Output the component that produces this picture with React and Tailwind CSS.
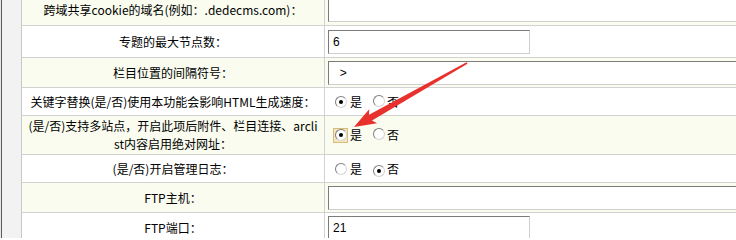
import React from "react";

const rows = [
  { label: "跨域共享cookie的域名(例如：.dedecms.com)：", h: "h-[32px]", alt: true, type: "wide", value: "" },
  { label: "专题的最大节点数：", h: "h-[32px]", alt: false, type: "short", value: "6" },
  { label: "栏目位置的间隔符号：", h: "h-[30px]", alt: true, type: "wide", value: "  >" },
  { label: "关键字替换(是/否)使用本功能会影响HTML生成速度：", h: "h-[28px]", alt: false, type: "radio", yes: true },
  {
    label: (
      <>
        <span className="block whitespace-nowrap">(是/否)支持多站点，开启此项后附件、栏目连接、arcli</span>
        <span className="block whitespace-nowrap">st内容启用绝对网址：</span>
      </>
    ),
    h: "h-[39px]",
    alt: true,
    type: "radio",
    yes: true,
    focus: true,
  },
  { label: "(是/否)开启管理日志：", h: "h-[28px]", alt: false, type: "radio", yes: false },
  { label: "FTP主机：", h: "h-[30px]", alt: true, type: "wide", value: "" },
  { label: "FTP端口：", h: "h-[30px]", alt: false, type: "short", value: "21" },
];

const Radio = ({ checked, focus }) => (
  <span
    className={
      focus
        ? "inline-flex h-[15px] w-[15px] items-center justify-center border border-[#d6bd7a] bg-[#f3e7c0]"
        : "inline-flex h-[15px] w-[15px] items-center justify-center"
    }
  >
    <span className="flex h-[12px] w-[12px] items-center justify-center rounded-full border border-[#7e7e7e] border-r-[#d4d4d4] border-b-[#d4d4d4] bg-white">
      {checked && <span className="h-[4px] w-[4px] rounded-full bg-black" />}
    </span>
  </span>
);

const Field = ({ row }) => {
  if (row.type === "radio") {
    return (
      <div className="flex items-center pl-[5px]">
        <Radio checked={row.yes} focus={row.focus} />
        <span className="ml-[2px]">是</span>
        <span className="ml-[9px]">
          <Radio checked={!row.yes} />
        </span>
        <span className="ml-[1px]">否</span>
      </div>
    );
  }
  return (
    <input
      type="text"
      defaultValue={row.value}
      className={`${row.type === "wide" ? "w-[460px]" : "w-[202px]"} h-[24px] shrink-0 border border-[#7b7b7b] border-r-[#cfcfcf] border-b-[#cfcfcf] bg-white pl-[4px] text-[12px] text-black outline-none [font-family:'Liberation_Sans',sans-serif] whitespace-pre`}
    />
  );
};

export default function App() {
  return (
    <div className="relative h-[238px] w-[736px] overflow-hidden bg-white text-[12px] text-black [font-family:'Noto_Sans_CJK_SC',sans-serif]">
      <div className="flex h-full">
        <div className="h-full w-[1px] bg-[#e6e6e6]" />
        <div className="h-full w-[1px] bg-[#5c5c5c]" />
        <div className="h-full w-[20px] border-r border-[#c9c9c9] bg-[#f2f2f2]" />
        <div className="-mt-[6px] flex-1 overflow-hidden">
          {rows.map((row, i) => (
            <div
              key={i}
              className={`${row.h} ${row.alt ? "bg-[#f9fcef]" : "bg-white"} flex border-b border-[#d2d2d2]`}
            >
              <div className="flex w-[303px] shrink-0 flex-col items-center justify-center border-r border-[#d2d2d2] text-center leading-[18px]">
                {row.label}
              </div>
              <div className="flex flex-1 items-center overflow-hidden pl-[3px]">
                <Field row={row} />
              </div>
            </div>
          ))}
        </div>
      </div>
      <svg className="pointer-events-none absolute left-0 top-0" width="736" height="238" viewBox="0 0 736 238">
        <polygon
          points="354,127 369.2,109.2 369,114.8 466.5,62.2 467.5,63.8 372,120.4 377.1,123.2"
          fill="#e8302c"
        />
      </svg>
    </div>
  );
}
